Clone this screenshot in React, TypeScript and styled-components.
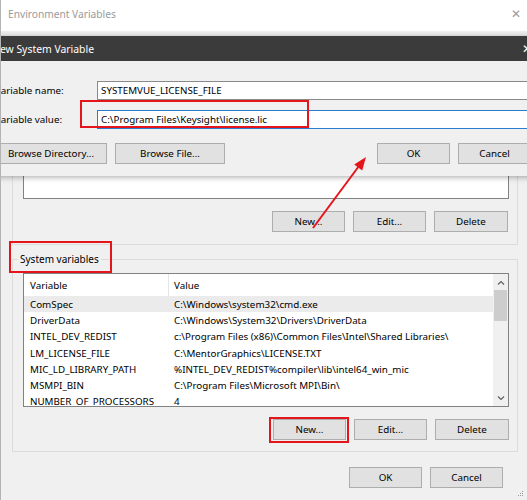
import React from 'react';
import styled, {createGlobalStyle} from 'styled-components';

const GlobalStyle = createGlobalStyle`
  html, body {
    margin: 0;
    padding: 0;
    background: #f0f0f0;
  }
  * {
    box-sizing: border-box;
  }
`

const FONT = `"Noto Sans", "Open Sans", sans-serif`

const Screen = styled.div`
  position: relative;
  width: 527px;
  height: 500px;
  overflow: hidden;
  background: #f0f0f0;
  font-family: ${FONT};
  font-size: 9.8px;
  color: #000;
  border-left: 1px solid #b4b4b4;
`

const EnvTitle = styled.div`
  height: 31px;
  background: #fff;
  display: flex;
  align-items: center;
  justify-content: space-between;
  padding: 0 6px 4px 7px;
  color: #9a9a9a;
  font-size: 10.2px;
`

const CloseGlyph = styled.span<{light?: boolean}>`
  font-size: 12px;
  color: ${p => p.light ? '#fff' : '#9a9a9a'};
  font-weight: 300;
`

const Dialog = styled.div`
  position: relative;
  z-index: 2;
  margin: 5px 0 0 -17px;
  width: 560px;
  background: #f0f0f0;
  box-shadow: 0 1px 6px rgba(0, 0, 0, 0.35);
`

const DialogTitle = styled.div`
  height: 25px;
  background: #3b3b3b;
  color: #fff;
  display: flex;
  align-items: center;
  justify-content: space-between;
  padding: 0 12px 0 8px;
  font-size: 10.4px;
`

const DialogBody = styled.div`
  padding: 20px 13px 12px 11px;
`

const FieldGrid = styled.div`
  display: grid;
  grid-template-columns: 102px 1fr;
  row-gap: 10px;
  align-items: center;
`

const Label = styled.span`
  white-space: nowrap;
`

const TextBox = styled.div<{focused?: boolean}>`
  height: 19px;
  background: #fff;
  border: 1px solid ${p => p.focused ? '#2a7ccf' : '#8a8a8a'};
  display: flex;
  align-items: center;
  padding-left: 3px;
  white-space: nowrap;
`

const ButtonRow = styled.div<{top: number}>`
  display: flex;
  align-items: center;
  gap: 8px;
  margin-top: ${p => p.top}px;
`

const Spacer = styled.div`
  flex: 1;
`

const Button = styled.div<{w: number}>`
  width: ${p => p.w}px;
  height: 21px;
  flex: 0 0 auto;
  display: flex;
  align-items: center;
  justify-content: center;
  background: #e1e1e1;
  border: 1px solid #adadad;
  white-space: nowrap;
`

const UserGroup = styled.div`
  margin-left: 11px;
  width: 506px;
  border: 1px solid #dcdcdc;
  border-top: none;
  padding: 0 9px 12px 10px;
`

const ListStub = styled.div`
  height: 23px;
  width: 486px;
  background: #fff;
  border: 1px solid #828282;
  border-top: none;
`

const GroupRow = styled(ButtonRow)`
  justify-content: flex-end;
`

const SystemGroup = styled.fieldset`
  margin: 6px 0 0 11px;
  width: 506px;
  min-width: 0;
  border: 1px solid #dcdcdc;
  padding: 6px 8px 11px 10px;
`

const Legend = styled.legend`
  margin-left: -5px;
  padding: 0 2px;
  line-height: 16px;
  font-size: 10px;
`

const ListBox = styled.div`
  height: 134px;
  width: 486px;
  border: 1px solid #828282;
  background: #fff;
  display: flex;
  overflow: hidden;
`

const Table = styled.div`
  flex: 1;
  min-width: 0;
`

const HeaderRow = styled.div`
  height: 22px;
  display: grid;
  grid-template-columns: 144px 1fr;
  align-items: center;
`

const HeaderCell = styled.div<{divider?: boolean}>`
  height: 100%;
  display: flex;
  align-items: center;
  padding-left: ${p => p.divider ? 5 : 6}px;
  border-left: ${p => p.divider ? '1px solid #e5e5e5' : 'none'};
`

const Row = styled.div<{selected?: boolean}>`
  height: 16.3px;
  display: grid;
  grid-template-columns: 145px 1fr;
  align-items: center;
  background: ${p => p.selected ? '#ebebeb' : 'transparent'};
`

const Cell = styled.div<{value?: boolean}>`
  padding-left: ${p => p.value ? 5 : 6}px;
  white-space: nowrap;
  overflow: hidden;
`

const ScrollBar = styled.div`
  width: 15px;
  background: #f0f0f0;
  display: flex;
  flex-direction: column;
  align-items: stretch;
`

const ScrollArrow = styled.div`
  height: 16px;
  display: flex;
  align-items: center;
  justify-content: center;
`

const Thumb = styled.div`
  height: 31px;
  margin: 0 1px;
  background: #cdcdcd;
`

const FooterRow = styled(ButtonRow)`
  justify-content: flex-end;
  padding-right: 24px;
`

const Grip = styled.svg`
  position: absolute;
  right: 3px;
  bottom: 3px;
`

const RedBox = styled.div<{x: number; y: number; w: number; h: number}>`
  position: absolute;
  z-index: 5;
  left: ${p => p.x}px;
  top: ${p => p.y}px;
  width: ${p => p.w}px;
  height: ${p => p.h}px;
  border: 2px solid #e4161b;
`

const ArrowLayer = styled.svg`
  position: absolute;
  z-index: 5;
  left: 0;
  top: 0;
  pointer-events: none;
`

const vars: [string, string][] = [
    ['ComSpec', 'C:\\Windows\\system32\\cmd.exe'],
    ['DriverData', 'C:\\Windows\\System32\\Drivers\\DriverData'],
    ['INTEL_DEV_REDIST', 'c:\\Program Files (x86)\\Common Files\\Intel\\Shared Libraries\\'],
    ['LM_LICENSE_FILE', 'C:\\MentorGraphics\\LICENSE.TXT'],
    ['MIC_LD_LIBRARY_PATH', '%INTEL_DEV_REDIST%compiler\\lib\\intel64_win_mic'],
    ['MSMPI_BIN', 'C:\\Program Files\\Microsoft MPI\\Bin\\'],
    ['NUMBER_OF_PROCESSORS', '4'],
]

const Chevron = ({up}: {up?: boolean}) => (
    <svg width="8" height="5" viewBox="0 0 8 5">
        <path d={up ? 'M1 4.5 L4 1.5 L7 4.5' : 'M1 0.5 L4 3.5 L7 0.5'} stroke="#606060" strokeWidth="1.2" fill="none"/>
    </svg>
)

export default function App() {
    return (
        <Screen>
            <GlobalStyle/>
            <EnvTitle>
                <span>Environment Variables</span>
                <CloseGlyph>✕</CloseGlyph>
            </EnvTitle>

            <Dialog>
                <DialogTitle>
                    <span>New System Variable</span>
                    <CloseGlyph light>✕</CloseGlyph>
                </DialogTitle>
                <DialogBody>
                    <FieldGrid>
                        <Label>Variable name:</Label>
                        <TextBox>SYSTEMVUE_LICENSE_FILE</TextBox>
                        <Label>Variable value:</Label>
                        <TextBox focused>C:\Program Files\Keysight\license.lic</TextBox>
                    </FieldGrid>
                    <ButtonRow top={14}>
                        <Button w={112}>Browse Directory...</Button>
                        <Button w={110}>Browse File...</Button>
                        <Spacer/>
                        <Button w={73}>OK</Button>
                        <Button w={73}>Cancel</Button>
                    </ButtonRow>
                </DialogBody>
            </Dialog>

            <UserGroup>
                <ListStub/>
                <GroupRow top={12}>
                    <Button w={73}>New...</Button>
                    <Button w={73}>Edit...</Button>
                    <Button w={74}>Delete</Button>
                </GroupRow>
            </UserGroup>

            <SystemGroup>
                <Legend>System variables</Legend>
                <ListBox>
                    <Table>
                        <HeaderRow>
                            <HeaderCell>Variable</HeaderCell>
                            <HeaderCell divider>Value</HeaderCell>
                        </HeaderRow>
                        {vars.map(([name, value], i) => (
                            <Row key={name} selected={i === 0}>
                                <Cell>{name}</Cell>
                                <Cell value>{value}</Cell>
                            </Row>
                        ))}
                    </Table>
                    <ScrollBar>
                        <ScrollArrow><Chevron up/></ScrollArrow>
                        <Thumb/>
                        <Spacer/>
                        <ScrollArrow><Chevron/></ScrollArrow>
                    </ScrollBar>
                </ListBox>
                <GroupRow top={12}>
                    <Button w={73}>New...</Button>
                    <Button w={73}>Edit...</Button>
                    <Button w={74}>Delete</Button>
                </GroupRow>
            </SystemGroup>

            <FooterRow top={15}>
                <Button w={73}>OK</Button>
                <Button w={73}>Cancel</Button>
            </FooterRow>

            <Grip width="8" height="8" viewBox="0 0 8 8">
                <rect x="6" y="2" width="1" height="1" fill="#9a9a9a"/>
                <rect x="4" y="4" width="1" height="1" fill="#9a9a9a"/>
                <rect x="6" y="4" width="1" height="1" fill="#9a9a9a"/>
                <rect x="2" y="6" width="1" height="1" fill="#9a9a9a"/>
                <rect x="4" y="6" width="1" height="1" fill="#9a9a9a"/>
                <rect x="6" y="6" width="1" height="1" fill="#9a9a9a"/>
            </Grip>

            <RedBox x={79} y={100} w={229} h={28}/>
            <RedBox x={8} y={241} w={103} h={32}/>
            <RedBox x={268} y={417} w={80} h={26}/>

            <ArrowLayer width="527" height="500" viewBox="0 0 527 500">
                <line x1="312" y1="228" x2="358" y2="166" stroke="#e4161b" strokeWidth="2"/>
                <polygon points="365,157 361.2,170.4 353.2,164.4" fill="#e4161b"/>
            </ArrowLayer>
        </Screen>
    );
}
